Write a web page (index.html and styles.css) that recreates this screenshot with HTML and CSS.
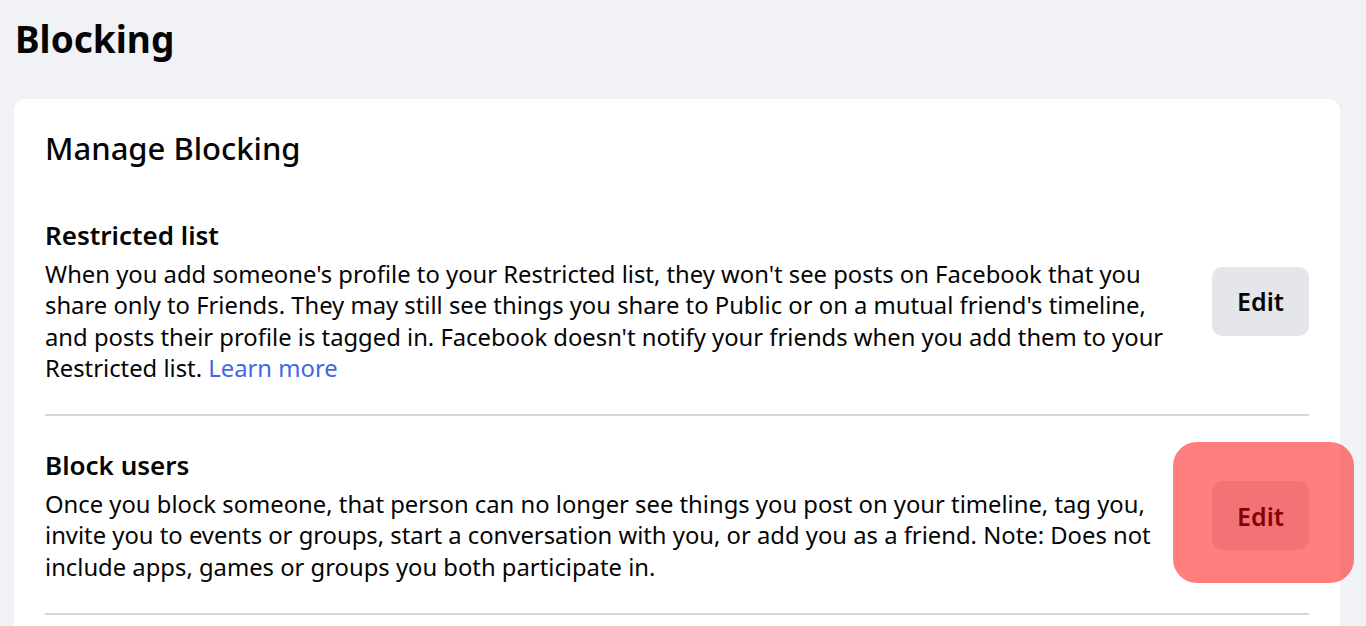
FILE: index.html
```html
<!DOCTYPE html>
<html lang="en">
<head>
    <meta charset="UTF-8">
    <title>Blocking</title>
    <link rel="stylesheet" href="styles.css">
</head>
<body>
    <h1 class="page-title">Blocking</h1>
    <div class="card">
        <h2 class="card-title">Manage Blocking</h2>

        <div class="setting-row">
            <div class="setting-text">
                <h3>Restricted list</h3>
                <p>When you add someone's profile to your Restricted list, they won't see posts on Facebook that you share only to Friends. They may still see things you share to Public or on a mutual friend's timeline, and posts their profile is tagged in. Facebook doesn't notify your friends when you add them to your Restricted list. <a href="#">Learn more</a></p>
            </div>
            <div class="setting-action">
                <button class="edit-btn">Edit</button>
            </div>
        </div>

        <div class="setting-row">
            <div class="setting-text">
                <h3>Block users</h3>
                <p>Once you block someone, that person can no longer see things you post on your timeline, tag you, invite you to events or groups, start a conversation with you, or add you as a friend. Note: Does not include apps, games or groups you both participate in.</p>
            </div>
            <div class="setting-action">
                <button class="edit-btn">Edit</button>
                <!-- highlight over the button -->
                <div class="highlight"></div>
            </div>
        </div>
    </div>
</body>
</html>
```

FILE: styles.css
```css
* {
    box-sizing: border-box;
    margin: 0;
    padding: 0;
}

body {
    font-family: "Segoe UI", "Noto Sans", "Open Sans", sans-serif;
    background-color: #f0f2f5;
    color: #050505;
    padding: 14px 26px 0 14px;
    overflow: hidden;
}

.page-title {
    font-size: 37px;
    font-weight: 700;
    line-height: 50px;
    margin-left: 1px;
    margin-bottom: 35px;
}

.card {
    background-color: #fff;
    border-radius: 12px;
    padding: 24px 31px 40px 31px;
}

.card-title {
    font-size: 31px;
    font-weight: 500;
    line-height: 50px;
    margin-bottom: 45px;
}

.setting-row {
    display: flex;
    align-items: center;
    gap: 40px;
    padding: 32px 0 30px 0;
    border-bottom: 2px solid #d4d6da;
}

.setting-row:first-of-type {
    padding-top: 0;
}

.setting-text {
    flex: 1;
}

.setting-text h3 {
    font-size: 26px;
    font-weight: 600;
    line-height: 34px;
    margin-bottom: 7px;
}

.setting-text p {
    font-size: 23.8px;
    line-height: 31.3px;
}

.setting-text a {
    color: #4267e0;
    text-decoration: none;
}

.setting-action {
    position: relative;
}

.edit-btn {
    font-family: inherit;
    font-size: 25px;
    font-weight: 600;
    color: #050505;
    background-color: #e4e6eb;
    border: none;
    border-radius: 10px;
    width: 97px;
    height: 69px;
}

.highlight {
    position: absolute;
    left: -39px;
    top: -39px;
    width: 181px;
    height: 141px;
    border-radius: 24px;
    background-color: rgba(255, 0, 0, 0.5);
}
```
